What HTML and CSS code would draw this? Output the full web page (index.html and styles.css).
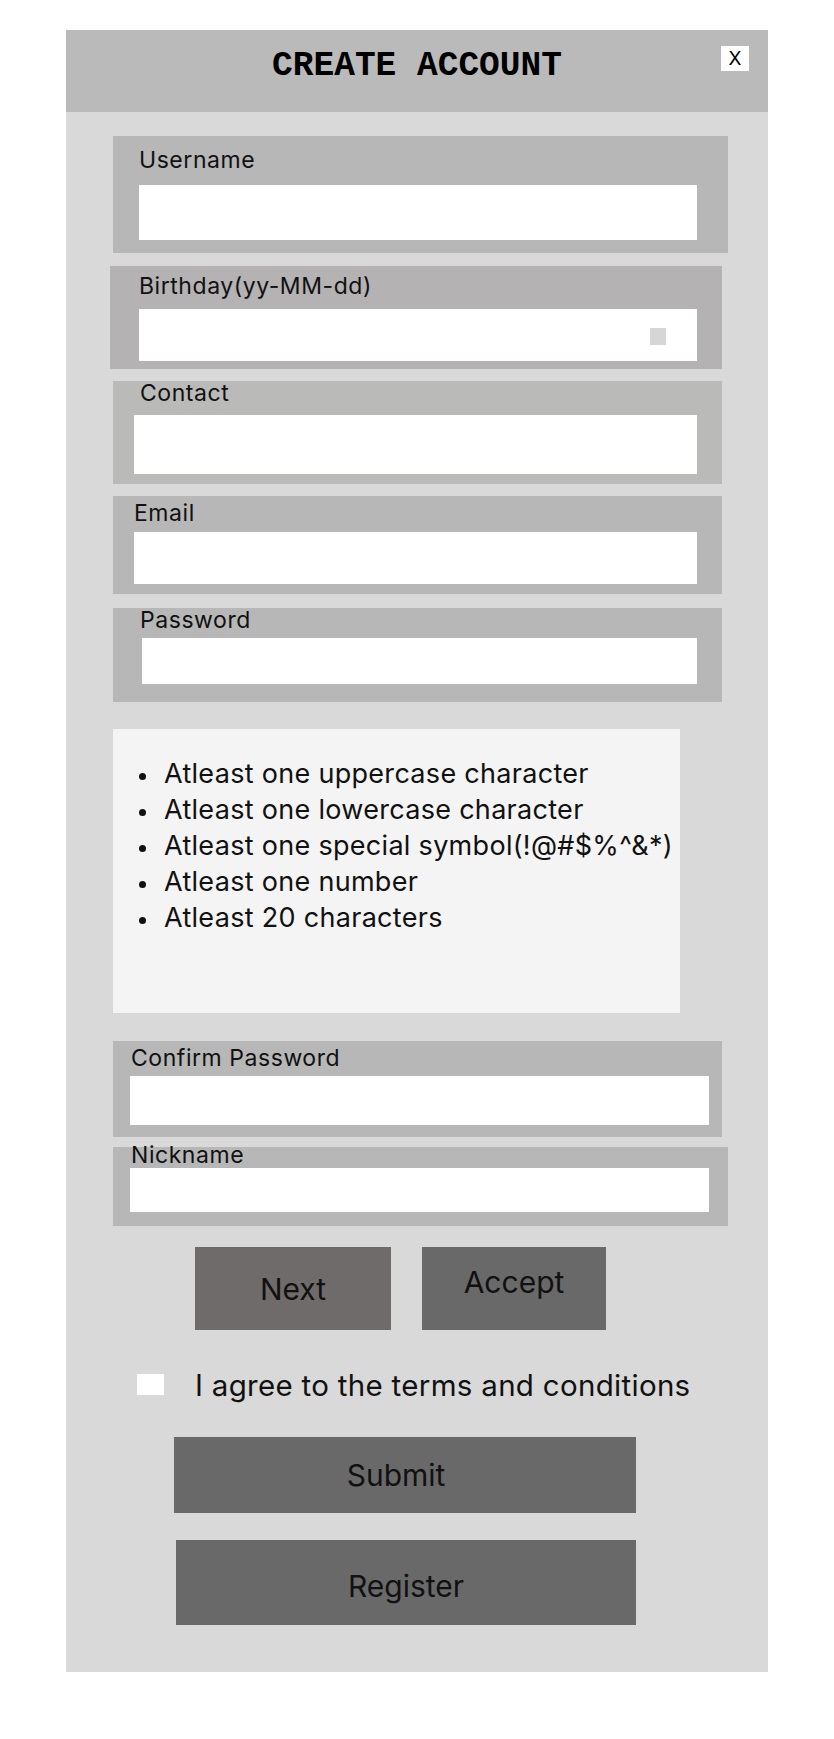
FILE: index.html
```html
<!DOCTYPE html>
<html lang="en">
<head>
<meta charset="utf-8">
<title>Create Account</title>
<link rel="stylesheet" href="styles.css">
</head>
<body>
<div class="panel">
  <header class="panel-head">
    <h1 class="title">CREATE ACCOUNT</h1>
    <button class="close" type="button">X</button>
  </header>

  <div class="field f-username">
    <label class="field-label">Username</label>
    <div class="field-input"></div>
  </div>

  <div class="field f-birthday">
    <label class="field-label">Birthday(yy-MM-dd)</label>
    <div class="field-input date-input"><span class="date-icon"></span></div>
  </div>

  <div class="field f-contact">
    <label class="field-label">Contact</label>
    <div class="field-input"></div>
  </div>

  <div class="field f-email">
    <label class="field-label">Email</label>
    <div class="field-input"></div>
  </div>

  <div class="field f-password">
    <label class="field-label">Password</label>
    <div class="field-input"></div>
  </div>

  <div class="rules">
    <ul class="rules-list">
      <li>Atleast one uppercase character</li>
      <li>Atleast one lowercase character</li>
      <li>Atleast one special symbol(!@#$%^&amp;*)</li>
      <li>Atleast one number</li>
      <li>Atleast 20 characters</li>
    </ul>
  </div>

  <div class="field f-confirm">
    <label class="field-label">Confirm Password</label>
    <div class="field-input"></div>
  </div>

  <div class="field f-nickname">
    <label class="field-label">Nickname</label>
    <div class="field-input"></div>
  </div>

  <div class="btn-row">
    <button class="btn btn-next" type="button">Next</button>
    <button class="btn btn-accept" type="button">Accept</button>
  </div>

  <div class="agree">
    <span class="checkbox"></span>
    <span class="agree-text">I agree to the terms and conditions</span>
  </div>

  <button class="btn btn-submit" type="button">Submit</button>
  <button class="btn btn-register" type="button">Register</button>
</div>
</body>
</html>
```

FILE: styles.css
```css
* { box-sizing: border-box; }

body {
  margin: 0;
  background: #ffffff;
  font-family: Inter, "Noto Sans", sans-serif;
  color: #111111;
}

.panel {
  margin: 30px 0 0 66px;
  width: 702px;
  background: #d9d9d9;
  padding-bottom: 47px;
  display: flow-root;
}

.panel-head {
  position: relative;
  height: 82px;
  background: #bababa;
  padding-top: 19px;
}

.title {
  margin: 0;
  text-align: center;
  font-family: "Liberation Mono", "DejaVu Sans Mono", monospace;
  font-weight: bold;
  font-size: 34.5px;
  line-height: 34px;
  color: #000;
}

.close {
  position: absolute;
  top: 16px;
  right: 19px;
  width: 28px;
  height: 25px;
  padding: 0;
  border: 0;
  background: #ffffff;
  font-family: Inter, sans-serif;
  font-size: 19px;
  line-height: 25px;
  color: #000;
}

/* fields */
.field {
  display: flow-root;
  margin-left: 47px;
  background: #b7b7b7;
}

.field-label {
  display: block;
  font-size: 23px;
  letter-spacing: 0.55px;
  line-height: 22px;
  color: #111;
}

.field-input {
  background: #ffffff;
}

.f-username { width: 615px; margin-top: 24px; padding: 13px 0 13px; }
.f-username .field-label { margin-left: 26px; }
.f-username .field-input { margin: 14px 0 0 26px; width: 558px; height: 55px; }

.f-birthday { width: 612px; margin-top: 13px; margin-left: 44px; padding: 9px 0 8px; background: #b4b2b2; }
.f-birthday .field-label { margin-left: 29px; }
.f-birthday .field-input { margin: 12px 0 0 29px; width: 558px; height: 52px; }

.date-input {
  display: flex;
  justify-content: flex-end;
  align-items: center;
  padding-right: 31px;
  padding-top: 3px;
}

.date-icon {
  width: 16px;
  height: 17px;
  background: #d6d6d6;
}

.f-contact { width: 609px; margin-top: 12px; padding: 1px 0 10px; background: #babab9; }
.f-contact .field-label { margin-left: 27px; }
.f-contact .field-input { margin: 11px 0 0 21px; width: 563px; height: 59px; }

.f-email { width: 609px; margin-top: 12px; padding: 6px 0 10px; }
.f-email .field-label { margin-left: 21px; }
.f-email .field-input { margin: 8px 0 0 21px; width: 563px; height: 52px; }

.f-password { width: 609px; margin-top: 14px; padding: 1px 0 18px; }
.f-password .field-label { margin-left: 27px; }
.f-password .field-input { margin: 7px 0 0 29px; width: 555px; height: 46px; }

.f-confirm { width: 609px; margin-top: 28px; padding: 6px 0 12px; }
.f-confirm .field-label { margin-left: 18px; }
.f-confirm .field-input { margin: 7px 0 0 17px; width: 579px; height: 49px; }

.f-nickname { width: 615px; margin-top: 10px; padding: 0 0 14px; }
.f-nickname .field-label { margin-left: 18px; margin-top: -3px; }
.f-nickname .field-input { margin: 2px 0 0 17px; width: 579px; height: 44px; }

/* password rules */
.rules {
  margin: 27px 0 0 47px;
  width: 567px;
  height: 284px;
  background: #f4f4f4;
  padding-top: 27px;
}

.rules-list {
  margin: 0;
  padding-left: 26px;
  list-style: none;
  font-size: 27px;
  letter-spacing: 0.3px;
  line-height: 36px;
  color: #111;
}

.rules-list li {
  display: flex;
  align-items: center;
}

.rules-list li::before {
  content: "";
  flex: none;
  width: 7px;
  height: 7px;
  margin: 4px 18px 0 0;
  border-radius: 50%;
  background: #111;
}

/* buttons */
.btn {
  display: block;
  border: 0;
  padding: 0;
  font-family: Inter, sans-serif;
  font-size: 30px;
  color: #111;
  background: #696969;
}

.btn-row {
  display: flex;
  gap: 31px;
  margin: 21px 0 0 129px;
}

.btn-next {
  width: 196px;
  height: 83px;
  background: #6f6b6b;
}

.btn-accept {
  width: 184px;
  height: 83px;
  padding-bottom: 13px;
}

.agree {
  display: flex;
  align-items: center;
  gap: 31px;
  margin: 44px 0 0 71px;
  height: 21px;
}

.checkbox {
  width: 27px;
  height: 21px;
  background: #ffffff;
  flex: none;
}

.agree-text {
  font-size: 29.5px;
  letter-spacing: 0.3px;
  line-height: 21px;
  color: #111;
  padding-top: 1px;
}

.btn-submit {
  margin: 42px 0 0 108px;
  width: 462px;
  height: 76px;
  padding-right: 18px;
}

.btn-register {
  margin: 27px 0 0 110px;
  width: 460px;
  height: 85px;
  padding-top: 7px;
}
```
